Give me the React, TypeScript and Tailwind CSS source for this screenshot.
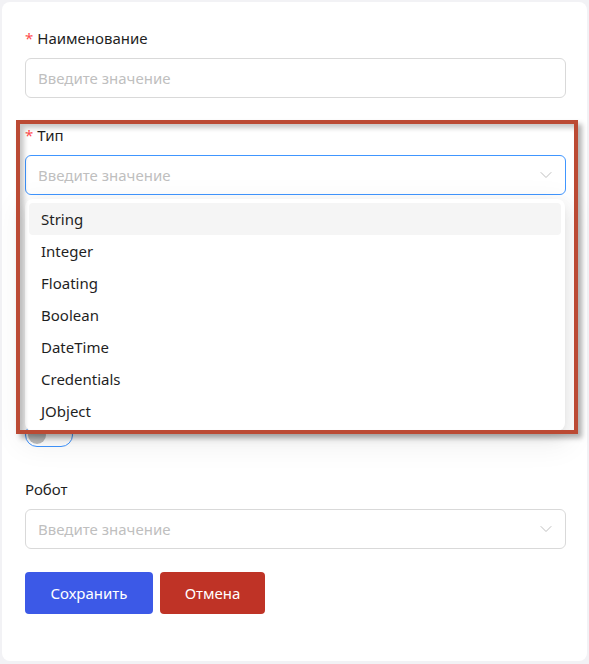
import React from 'react';
import { ChevronDown } from 'lucide-react';

const TYPES = ['String', 'Integer', 'Floating', 'Boolean', 'DateTime', 'Credentials', 'JObject'];

const Label: React.FC<{ text: string; required?: boolean }> = ({ text, required }) => (
  <div className="h-[22px] leading-[22px] text-[15px] text-[#1f1f1f] mb-[9px] flex items-center">
    {required && <span className="text-[#ff4d4f] mr-[4px] text-[15px]">*</span>}
    {text}
  </div>
);

const App: React.FC = () => {
  return (
    <div
      className="w-[589px] h-[664px] bg-[#f2f2f5] p-[2px] pb-[3px]"
      style={{ fontFamily: '"Noto Sans", "Open Sans", sans-serif' }}
    >
      <div className="relative h-full bg-white rounded-[8px] pl-[23px] pr-[21px] pt-[25px]">
        {/* Наименование */}
        <Label text="Наименование" required />
        <div className="h-[40px] border border-[#d9d9d9] rounded-[6px] px-[12px] flex items-center text-[15px] text-[#bfbfbf]">
          Введите значение
        </div>

        {/* Тип */}
        <div className="mt-[26px]">
          <Label text="Тип" required />
          <div className="h-[40px] border border-[#4096ff] rounded-[6px] pl-[12px] pr-[9px] flex items-center justify-between text-[15px] text-[#bfbfbf]">
            <span>Введите значение</span>
            <ChevronDown className="w-[20px] h-[20px] text-[#bfbfbf]" strokeWidth={1.2} />
          </div>
        </div>

        {/* Поля под выпадающим списком (закрыты им) */}
        <div className="mt-[26px]">
          <div className="h-[22px] mb-[9px]" />
          <div className="h-[114px]" />
        </div>
        <div className="mt-[26px]">
          <div className="h-[22px] mb-[9px]" />
          <div className="w-[48px] h-[24px] rounded-full border border-[#4096ff] bg-white flex items-center px-[2px]">
            <div className="w-[18px] h-[18px] rounded-full bg-[#bfbfbf]" />
          </div>
        </div>

        {/* Робот */}
        <div className="mt-[31px]">
          <Label text="Робот" />
          <div className="h-[40px] border border-[#d9d9d9] rounded-[6px] pl-[12px] pr-[9px] flex items-center justify-between text-[15px] text-[#bfbfbf]">
            <span>Введите значение</span>
            <ChevronDown className="w-[20px] h-[20px] text-[#bfbfbf]" strokeWidth={1.2} />
          </div>
        </div>

        <div className="mt-[23px] flex gap-[7px]">
          <button className="w-[128px] h-[42px] rounded-[4px] bg-[#3c59e7] text-white text-[15px]">Сохранить</button>
          <button className="w-[105px] h-[42px] rounded-[4px] bg-[#bf3326] text-white text-[15px]">Отмена</button>
        </div>

        {/* Выпадающий список */}
        <div className="absolute left-[23px] top-[197px] w-[540px] bg-white rounded-[8px] p-[4px] shadow-[0_6px_16px_rgba(0,0,0,0.08),0_3px_6px_-4px_rgba(0,0,0,0.12),0_9px_28px_8px_rgba(0,0,0,0.05)]">
          {TYPES.map((t, i) => (
            <div
              key={t}
              className={`h-[32px] px-[12px] flex items-center rounded-[4px] text-[15px] text-[#1f1f1f] ${i === 0 ? 'bg-[#f5f5f5]' : ''}`}
            >
              {t}
            </div>
          ))}
        </div>

        {/* Рамка-аннотация */}
        <div className="absolute left-[14px] top-[118px] w-[562px] h-[314px] border-[4px] border-[#bb4a34] pointer-events-none shadow-[inset_4px_4px_5px_rgba(0,0,0,0.22),4px_4px_5px_rgba(0,0,0,0.3)]" />
      </div>
    </div>
  );
};

export default App;
